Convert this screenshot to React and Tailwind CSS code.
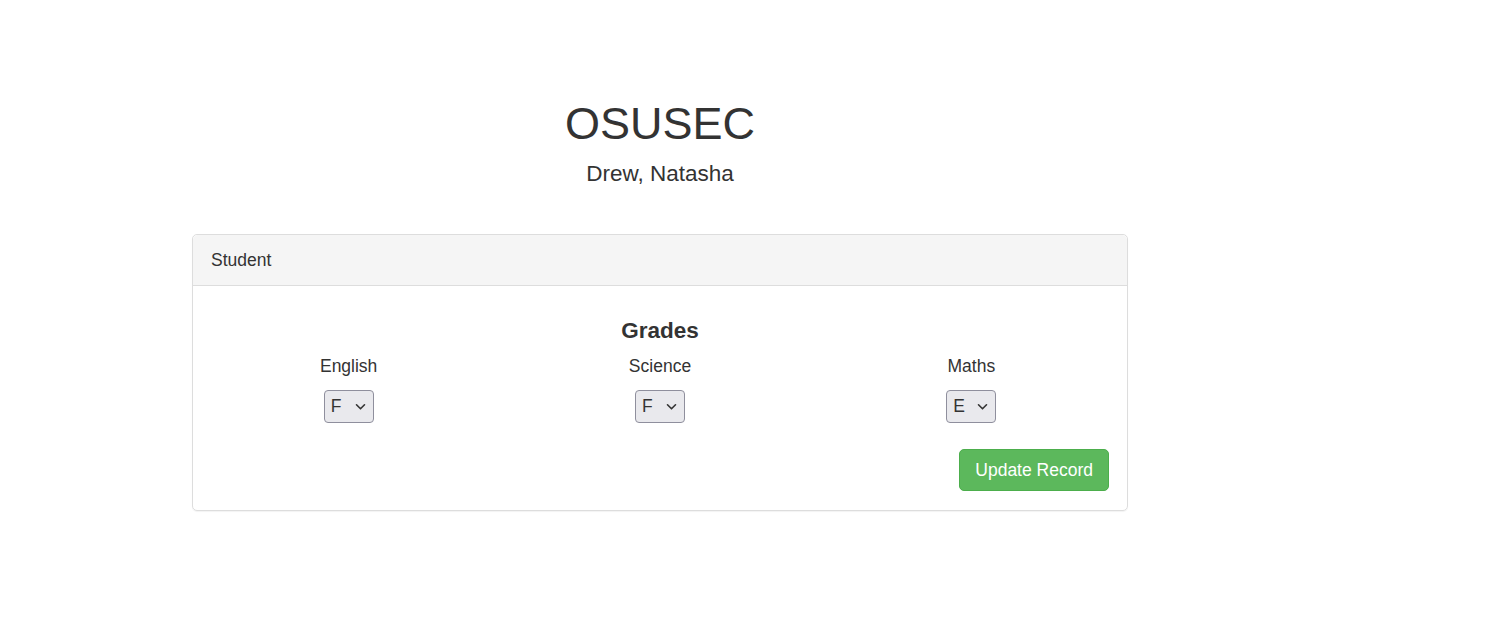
import React from "react";

function GradeSelect({ label, value }) {
  return (
    <div className="flex flex-col items-center">
      <div className="text-[17.5px] leading-[25px] text-[#333]">{label}</div>
      <div className="mt-[11px] relative h-[33px] w-[50px] rounded-[4px] border border-[#8f8f9d] bg-[#e9e9ed] flex items-center">
        <span className="ml-[6px] text-[17.5px] text-[#333] leading-none">{value}</span>
        <svg className="absolute right-[7px] top-[12px]" width="11" height="8" viewBox="0 0 11 8" fill="none">
          <path d="M1.5 1.8 L5.5 5.8 L9.5 1.8" stroke="#333" strokeWidth="1.6" strokeLinecap="round" strokeLinejoin="round" />
        </svg>
      </div>
    </div>
  );
}

export default function App() {
  return (
    <div className="min-h-[638px] bg-white" style={{ fontFamily: '"Liberation Sans", Arial, sans-serif' }}>
      <div className="ml-[192px] w-[936px] pt-[99px]">
        <h1 className="text-center text-[45px] leading-[50px] text-[#333]">OSUSEC</h1>
        <h4 className="mt-[12px] text-center text-[22.5px] leading-[25px] text-[#333]">Drew, Natasha</h4>
        <div className="mt-[48px] rounded-[5px] border border-[#ddd] shadow-[0_1px_1px_rgba(0,0,0,0.05)]">
          <div className="h-[51px] flex items-center px-[18px] bg-[#f5f5f5] border-b border-[#ddd] rounded-t-[5px] text-[17.5px] text-[#333]">
            Student
          </div>
          <div className="pt-[32px] pb-[19px]">
            <h3 className="text-center font-bold text-[22.5px] leading-[25px] text-[#333]">Grades</h3>
            <div className="mt-[11px] grid grid-cols-3">
              <GradeSelect label="English" value="F" />
              <GradeSelect label="Science" value="F" />
              <GradeSelect label="Maths" value="E" />
            </div>
            <div className="mt-[26px] flex justify-end pr-[18px]">
              <button className="h-[42px] px-[15px] rounded-[5px] border border-[#4cae4c] bg-[#5cb85c] text-white text-[17.5px]">
                Update Record
              </button>
            </div>
          </div>
        </div>
      </div>
    </div>
  );
}
